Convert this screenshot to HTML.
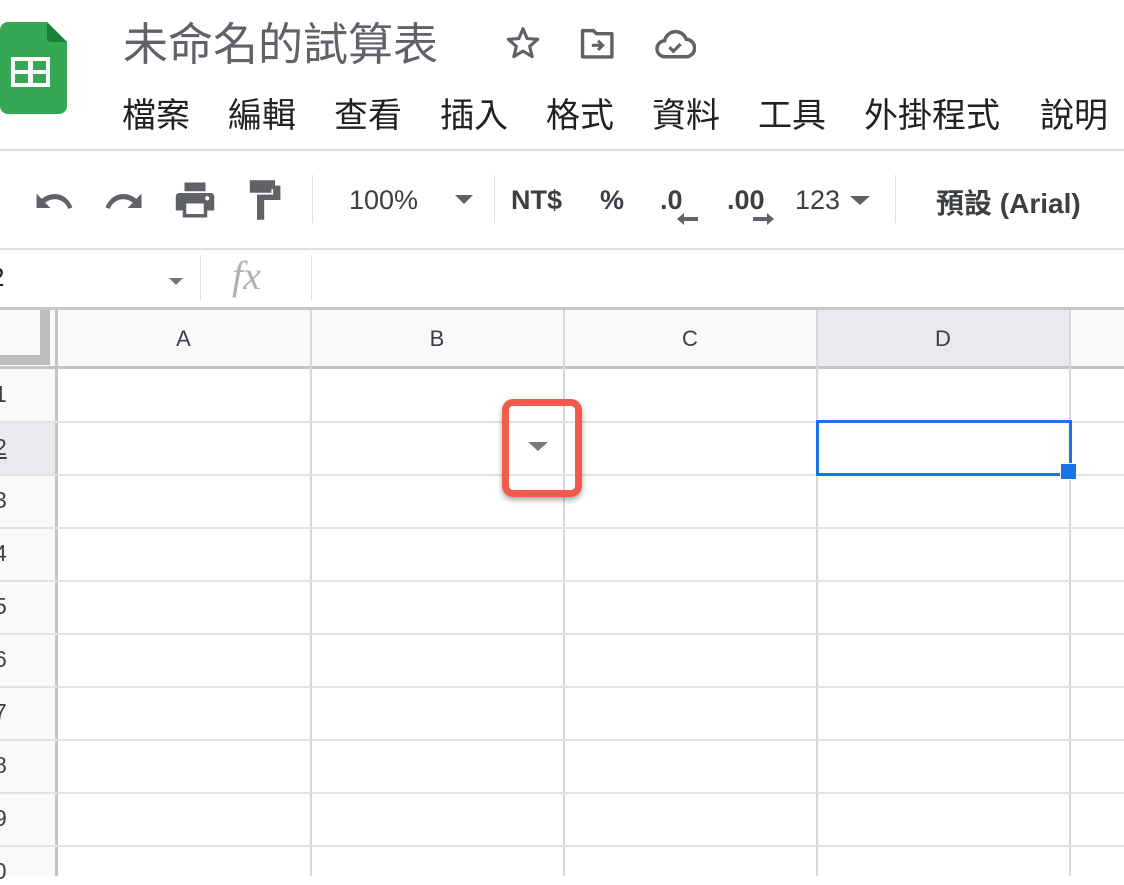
<!DOCTYPE html>
<html><head><meta charset="utf-8"><style>
body{margin:0;width:1124px;height:876px;overflow:hidden;background:#fff;position:relative;font-family:"Liberation Sans","Noto Sans CJK TC",sans-serif}
.a{position:absolute}
.t{color:#5f6368;font-size:45px;white-space:nowrap;line-height:1}
.m{color:#202124;font-size:34px;top:99px;white-space:nowrap;line-height:1}
.tb{color:#3c4043;font-size:27px;font-weight:bold;top:185px;white-space:nowrap}
.vl{position:absolute;width:1px;background:#e0e0e0}
.hl{position:absolute;height:1px;background:#e2e2e2}
.ch{position:absolute;top:310px;height:56px;background:#f8f9fa;color:#3c4043;font-size:22px;text-align:center;line-height:58px}
.rn{position:absolute;left:-6px;font-size:23px;color:#3c4043}
</style></head><body>
<svg class="a" style="left:0;top:22px" width="68" height="92" viewBox="0 0 68 92">
<path d="M8 0H47L67 20V84a8 8 0 0 1-8 8H8a8 8 0 0 1-8-8V8a8 8 0 0 1 8-8z" fill="#34a853"/>
<path d="M47 0L67 20H51a4 4 0 0 1-4-4z" fill="#188038"/>
<rect x="11" y="35" width="39" height="30" fill="#fff"/>
<rect x="15" y="39" width="13" height="9" fill="#34a853"/><rect x="33" y="39" width="13" height="9" fill="#34a853"/>
<rect x="15" y="52" width="13" height="9" fill="#34a853"/><rect x="33" y="52" width="13" height="9" fill="#34a853"/>
</svg>
<div class="a t" style="left:123px;top:22px">未命名的試算表</div>
<svg class="a" style="left:503px;top:24px" width="40" height="38" viewBox="0 0 24 24"><path d="M12 3l2.6 6.2 6.7.5-5.1 4.4 1.6 6.5L12 17.1l-5.8 3.5 1.6-6.5-5.1-4.4 6.7-.5z" fill="none" stroke="#5f6368" stroke-width="2" stroke-linejoin="round"/></svg>
<svg class="a" style="left:579px;top:26px" width="38" height="34" viewBox="0 0 24 22"><path d="M2 3h7l2 2h10v15H2z" fill="none" stroke="#5f6368" stroke-width="2.2" stroke-linejoin="round"/><path d="M8 12.5h7M12 9.5l3 3-3 3" fill="none" stroke="#5f6368" stroke-width="2"/></svg>
<svg class="a" style="left:654px;top:28px" width="42" height="32" viewBox="0 0 26 20"><path d="M7 18a5 5 0 0 1-.5-10A7 7 0 0 1 20 7a5.5 5.5 0 0 1-.5 11z" fill="none" stroke="#5f6368" stroke-width="2.2"/><path d="M9.5 12l2.5 2.5 4.5-4.5" fill="none" stroke="#5f6368" stroke-width="2"/></svg>
<div class="a m" style="left:122px">檔案</div>
<div class="a m" style="left:228px">編輯</div>
<div class="a m" style="left:334px">查看</div>
<div class="a m" style="left:440px">插入</div>
<div class="a m" style="left:546px">格式</div>
<div class="a m" style="left:652px">資料</div>
<div class="a m" style="left:758px">工具</div>
<div class="a m" style="left:864px">外掛程式</div>
<div class="a m" style="left:1040px">說明</div>
<div class="hl" style="left:0;top:149px;width:1124px;height:2px;background:#dadce0"></div>
<svg class="a" style="left:33px;top:187px" width="42" height="28" viewBox="0 0 24 16"><path d="M12.5 4C9.5 4 7 5 5 6.8L2 3.8V12h8L7 9c1.5-1.3 3.4-2 5.5-2 3.5 0 6.5 2.3 7.6 5.5l2.4-.8C21 7.3 17.1 4 12.5 4z" fill="#5f6368"/></svg>
<svg class="a" style="left:103px;top:187px" width="42" height="28" viewBox="0 0 24 16"><g transform="translate(24 0) scale(-1 1)"><path d="M12.5 4C9.5 4 7 5 5 6.8L2 3.8V12h8L7 9c1.5-1.3 3.4-2 5.5-2 3.5 0 6.5 2.3 7.6 5.5l2.4-.8C21 7.3 17.1 4 12.5 4z" fill="#5f6368"/></g></svg>
<svg class="a" style="left:174px;top:180px" width="42" height="40" viewBox="0 0 24 22"><path d="M6 1h12v5H6z M3 7h18a2 2 0 0 1 2 2v8h-4v4H5v-4H1V9a2 2 0 0 1 2-2z" fill="#5f6368"/><rect x="7" y="13" width="10" height="6" fill="#fff"/><circle cx="19" cy="10" r="1.2" fill="#fff"/></svg>
<svg class="a" style="left:248px;top:180px" width="36" height="40" viewBox="0 0 20 22"><path d="M1 0h14v3h3v8H9v11H5V8h9V5h-1v2H1z" fill="#5f6368"/></svg>
<div class="vl" style="left:312px;top:175px;height:48px"></div>
<div class="a tb" style="left:349px;font-weight:normal;color:#3c4043">100%</div>
<svg class="a" style="left:455px;top:195px" width="18" height="10"><path d="M0 0h18L9 9z" fill="#5f6368"/></svg>
<div class="vl" style="left:494px;top:175px;height:48px"></div>
<div class="a tb" style="left:511px">NT$</div>
<div class="a tb" style="left:600px">%</div>
<div class="a tb" style="left:660px">.0</div>
<svg class="a" style="left:677px;top:213px" width="22" height="12"><path d="M0 6l7-6v4h14v4H7v4z" fill="#5f6368"/></svg>
<div class="a tb" style="left:727px">.00</div>
<svg class="a" style="left:752px;top:213px" width="22" height="12"><path d="M22 6l-7-6v4H1v4h14v4z" fill="#5f6368"/></svg>
<div class="a tb" style="left:795px;font-weight:normal">123</div>
<svg class="a" style="left:850px;top:196px" width="20" height="10"><path d="M0 0h20L10 9z" fill="#5f6368"/></svg>
<div class="vl" style="left:895px;top:175px;height:48px"></div>
<div class="a tb" style="left:936px;top:182px;font-size:28px">預設 (Arial)</div>
<div class="hl" style="left:0;top:248px;width:1124px;height:2px;background:#e0e0e0"></div>
<div class="a" style="left:-10px;top:262px;font-size:26px;color:#202124">2</div>
<svg class="a" style="left:169px;top:278px" width="14" height="8"><path d="M0 0h14L7 7z" fill="#777"/></svg>
<div class="vl" style="left:200px;top:255px;height:46px"></div>
<div class="a" style="left:232px;top:252px;font-size:40px;font-style:italic;font-family:'Liberation Serif',serif;color:#b0b0b0">fx</div>
<div class="vl" style="left:311px;top:255px;height:46px"></div>
<div class="hl" style="left:0;top:307px;width:1124px;height:3px;background:#c8c8c8"></div>
<div class="a" style="left:0;top:310px;width:57px;height:56px;background:#f8f9fa"></div>
<div class="a" style="left:40px;top:310px;width:10px;height:55px;background:#bdbdbd"></div>
<div class="a" style="left:0;top:355px;width:50px;height:10px;background:#bdbdbd"></div>
<div class="ch" style="left:57px;width:253px">A</div>
<div class="ch" style="left:311px;width:252px">B</div>
<div class="ch" style="left:564px;width:252px">C</div>
<div class="ch" style="left:817px;width:252px;background:#e8eaed">D</div>
<div class="ch" style="left:1070px;width:54px"></div>
<div class="a" style="left:0;top:366px;width:1124px;height:3px;background:#c4c4c4"></div>
<div class="a" style="left:0;top:369px;width:57px;height:507px;background:#f8f9fa"></div>
<div class="a" style="left:0;top:422px;width:57px;height:52px;background:#e8eaed"></div>
<div class="a" style="left:55px;top:310px;width:3px;height:566px;background:#c4c4c4"></div>
<div class="vl" style="left:310px;top:310px;height:566px;width:2px;background:#d8d8d8"></div>
<div class="vl" style="left:563px;top:310px;height:566px;width:2px;background:#d8d8d8"></div>
<div class="vl" style="left:816px;top:310px;height:566px;width:2px;background:#d8d8d8"></div>
<div class="vl" style="left:1069px;top:310px;height:566px;width:2px;background:#d8d8d8"></div>
<div class="hl" style="left:0;top:421px;width:1124px;height:2px"></div>
<div class="hl" style="left:0;top:474px;width:1124px;height:2px"></div>
<div class="hl" style="left:0;top:527px;width:1124px;height:2px"></div>
<div class="hl" style="left:0;top:580px;width:1124px;height:2px"></div>
<div class="hl" style="left:0;top:633px;width:1124px;height:2px"></div>
<div class="hl" style="left:0;top:686px;width:1124px;height:2px"></div>
<div class="hl" style="left:0;top:739px;width:1124px;height:2px"></div>
<div class="hl" style="left:0;top:792px;width:1124px;height:2px"></div>
<div class="hl" style="left:0;top:845px;width:1124px;height:2px"></div>
<div class="rn" style="top:381px">1</div>
<div class="rn" style="top:434px;text-decoration:underline">2</div>
<div class="rn" style="top:487px">3</div>
<div class="rn" style="top:540px">4</div>
<div class="rn" style="top:593px">5</div>
<div class="rn" style="top:646px">6</div>
<div class="rn" style="top:699px">7</div>
<div class="rn" style="top:752px">8</div>
<div class="rn" style="top:805px">9</div>
<div class="rn" style="top:858px;left:-19px">10</div>
<div class="a" style="left:816px;top:420px;width:250px;height:50px;border:3px solid #1a73e8"></div>
<div class="a" style="left:1060px;top:463px;width:15px;height:15px;background:#1a73e8;border:1px solid #fff"></div>
<svg class="a" style="left:528px;top:442px" width="20" height="10"><path d="M0 0h20L10 9z" fill="#7a7a7a"/></svg>
<div class="a" style="left:502px;top:399px;width:66px;height:84px;border:7px solid #f25a4b;border-radius:11px;box-shadow:0 3px 6px rgba(0,0,0,.35)"></div>
</body></html>
